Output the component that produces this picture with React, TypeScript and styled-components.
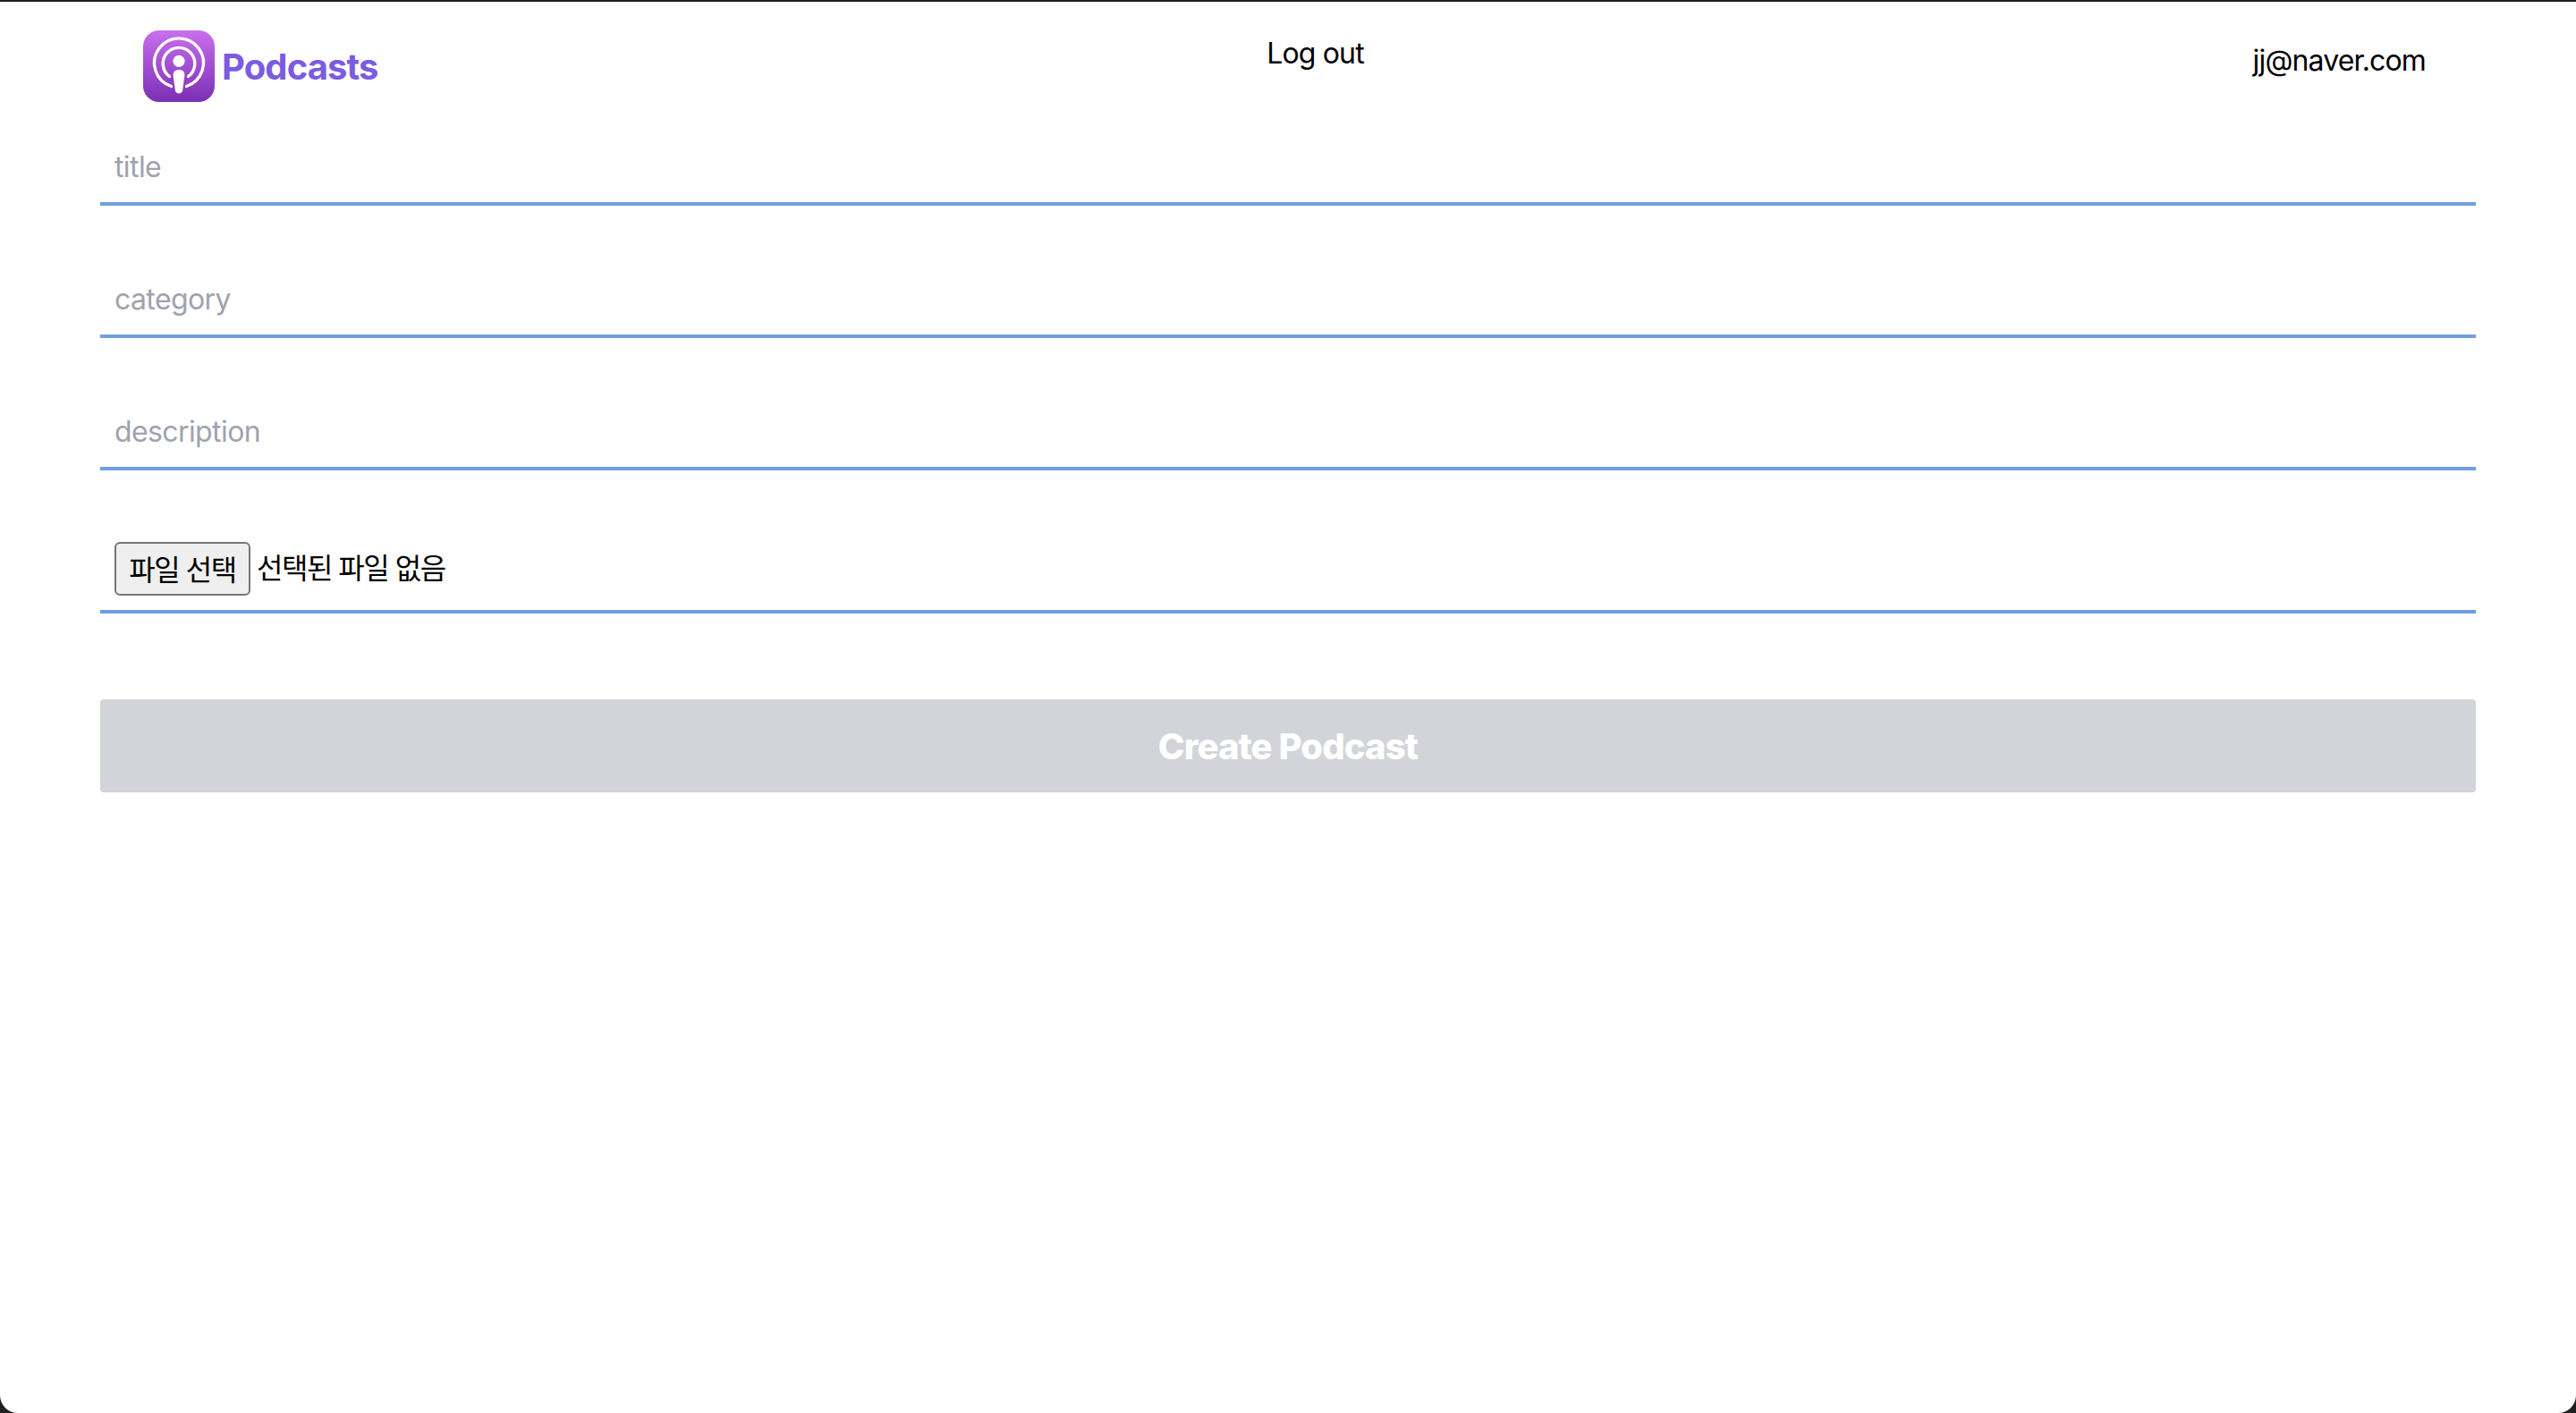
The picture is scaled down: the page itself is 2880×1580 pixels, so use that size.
import React from "react";
import styled, { createGlobalStyle } from "styled-components";

const Global = createGlobalStyle`
  html, body { margin: 0; padding: 0; background: #1f1f1f; }
  * { box-sizing: border-box; }
`;

const Frame = styled.div`
  margin-top: 2px;
  height: 1578px;
  background: #fff;
  border-radius: 0 0 20px 20px;
  overflow: hidden;
  font-family: Inter, "Noto Sans CJK KR", sans-serif;
  color: #000;
`;

const Header = styled.header`
  display: flex;
  justify-content: space-between;
  align-items: flex-start;
  padding: 32px 168px 0 160px;
  height: 138px;
`;

const Brand = styled.a`
  display: flex;
  align-items: center;
  gap: 8px;
  font-size: 40px;
  font-weight: 700;
  letter-spacing: -0.9px;
  color: #7b5ce1;
`;

const HeaderText = styled.span<{ $top: number }>`
  font-size: 32px;
  line-height: 40px;
  letter-spacing: -0.85px;
  margin-top: ${(p) => p.$top}px;
`;

const Form = styled.form`
  display: flex;
  flex-direction: column;
  padding: 0 112px;
`;

const Field = styled.input`
  display: block;
  width: 100%;
  height: 90px;
  padding: 6px 16px 0;
  margin-bottom: 58px;
  border: 0;
  border-bottom: 4px solid #719ee0;
  outline: none;
  background: transparent;
  font: 400 32px Inter, sans-serif;
  letter-spacing: -0.6px;
  &::placeholder { color: #a0a2ae; opacity: 1; }
`;

const FileRow = styled.div`
  display: flex;
  align-items: flex-start;
  gap: 7px;
  height: 86px;
  padding: 6px 16px 0;
  margin-top: 16px;
  border-bottom: 4px solid #719ee0;
  font-size: 32px;
  line-height: 60px;
  letter-spacing: -1.5px;
  font-family: Inter, "Noto Sans CJK KR", sans-serif;
`;

const FileButton = styled.button`
  width: 152px;
  height: 60px;
  padding: 0;
  background: #efefef;
  border: 2px solid #767676;
  border-radius: 6px;
  font: inherit;
  letter-spacing: -1.5px;
  color: #000;
`;

const Submit = styled.button`
  height: 104px;
  margin-top: 96px;
  border: 0;
  border-radius: 4px;
  background: #d2d4da;
  color: #fff;
  font: 800 40px Inter, sans-serif;
  letter-spacing: -0.9px;
`;

const Logo = () => (
  <svg width="80" height="80" viewBox="0 0 80 80">
    <defs>
      <linearGradient id="podcast-bg" x1="0" y1="0" x2="0" y2="1">
        <stop offset="0" stopColor="#c96fee" />
        <stop offset="1" stopColor="#7a2fb4" />
      </linearGradient>
    </defs>
    <rect width="80" height="80" rx="18" fill="url(#podcast-bg)" />
    <g fill="none" stroke="#fff" strokeLinecap="round">
      <path d="M31.5 62.5 A27.5 27.5 0 1 1 48.5 62.5" strokeWidth="3.4" />
      <path d="M29.5 51.5 A17.8 17.8 0 1 1 50.5 51.5" strokeWidth="3.4" />
    </g>
    <circle cx="40" cy="34.3" r="6.6" fill="#fff" />
    <path d="M40 44 C44.5 44 46.8 46.5 46.3 51 L44.2 67 C43.6 71.5 36.4 71.5 35.8 67 L33.7 51 C33.2 46.5 35.5 44 40 44 Z" fill="#fff" />
  </svg>
);

export default function App() {
  return (
    <>
      <Global />
      <Frame>
        <Header>
          <Brand>
            <Logo />
            Podcasts
          </Brand>
          <HeaderText $top={6}>Log out</HeaderText>
          <HeaderText $top={14}>jj@naver.com</HeaderText>
        </Header>
        <Form onSubmit={(e) => e.preventDefault()}>
          <Field placeholder="title" />
          <Field placeholder="category" />
          <Field placeholder="description" />
          <FileRow>
            <FileButton type="button">파일 선택</FileButton>
            <span>선택된 파일 없음</span>
          </FileRow>
          <Submit type="submit" disabled>Create Podcast</Submit>
        </Form>
      </Frame>
    </>
  );
}
